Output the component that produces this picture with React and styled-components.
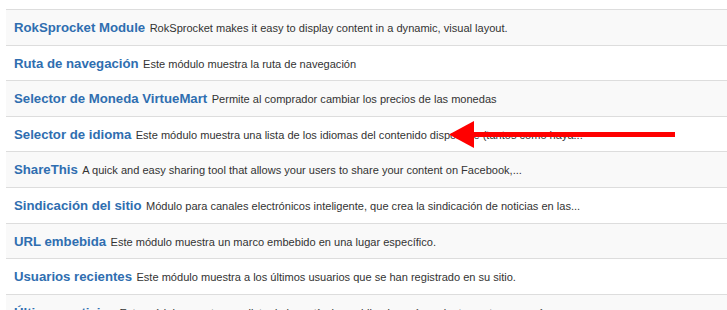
import React from "react";
import styled, { createGlobalStyle } from "styled-components";

const GlobalStyle = createGlobalStyle`
  html, body {
    margin: 0;
    padding: 0;
    background: #fff;
  }
  body {
    font-family: "Liberation Sans", Arial, sans-serif;
  }
`;

const Page = styled.div`
  position: relative;
  width: 727px;
  height: 310px;
  overflow: hidden;
  padding: 9px 0 0 6px;
  box-sizing: border-box;
`;

const List = styled.div`
  display: flex;
  flex-direction: column;
`;

const Row = styled.div`
  border-top: 1px solid #dddddd;
  background: ${(p) => (p.$striped ? "#f9f9f9" : "#ffffff")};
  padding: 8px 8px;
  line-height: 18.6px;
  height: 18.6px;
  box-sizing: content-box;
  white-space: nowrap;
  overflow: hidden;
  flex-shrink: 0;
`;

const Title = styled.a`
  color: #2f6eb0;
  font-weight: bold;
  font-size: 13.2px;
  text-decoration: none;
`;

const Desc = styled.span`
  color: #333333;
  font-size: 11.05px;
`;

const Arrow = styled.svg`
  position: absolute;
  left: 449px;
  top: 120px;
`;

const modules = [
  ["RokSprocket Module", "RokSprocket makes it easy to display content in a dynamic, visual layout."],
  ["Ruta de navegación", "Este módulo muestra la ruta de navegación"],
  ["Selector de Moneda VirtueMart", "Permite al comprador cambiar los precios de las monedas"],
  ["Selector de idioma", "Este módulo muestra una lista de los idiomas del contenido disponible (tantos como haya..."],
  ["ShareThis", "A quick and easy sharing tool that allows your users to share your content on Facebook,..."],
  ["Sindicación del sitio", "Módulo para canales electrónicos inteligente, que crea la sindicación de noticias en las..."],
  ["URL embebida", "Este módulo muestra un marco embebido en una lugar específico."],
  ["Usuarios recientes", "Este módulo muestra a los últimos usuarios que se han registrado en su sitio."],
  ["Últimas noticias", "Este módulo muestra una lista de los artículos publicados más recientemente y que aún..."],
];

export default function App() {
  return (
    <Page>
      <GlobalStyle />
      <List>
        {modules.map(([title, desc], i) => (
          <Row key={title} $striped={i % 2 === 0}>
            <Title href="#">{title}</Title> <Desc>{desc}</Desc>
          </Row>
        ))}
      </List>
      <Arrow width="230" height="30" viewBox="0 0 230 30">
        <rect x="22" y="12" width="204" height="5" fill="#ff0000" />
        <polygon points="0,14.5 25,1 25,28" fill="#ff0000" />
      </Arrow>
    </Page>
  );
}
